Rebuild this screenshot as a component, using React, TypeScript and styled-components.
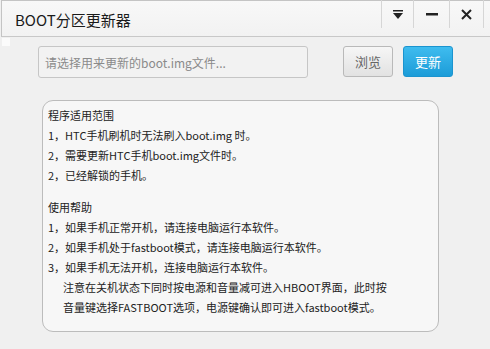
import React from 'react';
import styled, { createGlobalStyle } from 'styled-components';

const GlobalStyle = createGlobalStyle`
  html, body {
    margin: 0;
    padding: 0;
    background: #f0f0f0;
  }
  body {
    font-family: "Noto Sans CJK SC", "Noto Sans", sans-serif;
    color: #222;
  }
`;

const Window = styled.div`
  width: 490px;
  height: 349px;
  background: #f0f0f0;
  display: flex;
  flex-direction: column;
  overflow: hidden;
`;

const TitleBar = styled.div`
  display: flex;
  align-items: stretch;
  justify-content: space-between;
  background: linear-gradient(#f8f8f8, #f2f2f2);
  border-top: 1px solid #c4c4c4;
  border-left: 1px solid #c4c4c4;
  border-bottom: 1px solid #c8c8c8;
  margin-left: 1px;
  box-sizing: border-box;
  height: 37px;
`;

const Title = styled.div`
  font-size: 15px;
  line-height: 1;
  padding: 11px 0 0 13px;
  color: #1a1a1a;
`;

const Controls = styled.div`
  display: flex;
  height: 28px;
  margin-top: -1px;
  margin-right: 6px;
  border-right: 1px solid #d6d6d6;
`;

const ControlButton = styled.div<{ $w: number }>`
  width: ${(p) => p.$w}px;
  border-left: 1px solid #d6d6d6;
  display: flex;
  align-items: center;
  justify-content: center;
  color: #222;
`;

const Body = styled.div`
  position: relative;
  flex: 1;
  display: flex;
  flex-direction: column;
  padding-top: 9px;
`;

const Marker = styled.div`
  position: absolute;
  left: 2px;
  top: 1px;
  width: 8px;
  height: 8px;
  background: #fbfbfb;
`;

const FileRow = styled.div`
  display: flex;
  align-items: flex-start;
  margin-left: 38px;
`;

const PathInput = styled.div`
  width: 270px;
  height: 32px;
  box-sizing: border-box;
  border: 1px solid #c6c6c6;
  border-radius: 3px;
  background: #f2f2f2;
  font-size: 12px;
  color: #8a8a8a;
  display: flex;
  align-items: center;
  padding-left: 6px;
`;

const Button = styled.div<{ $primary?: boolean }>`
  width: 50px;
  height: 31px;
  box-sizing: border-box;
  border-radius: 3px;
  display: flex;
  align-items: center;
  justify-content: center;
  font-size: 13px;
  border: 1px solid ${(p) => (p.$primary ? '#1b94cf' : '#b9b9b9')};
  background: ${(p) =>
    p.$primary ? 'linear-gradient(#3fbcef, #1c9cd8)' : 'linear-gradient(#f6f6f6, #e2e2e2)'};
  color: ${(p) => (p.$primary ? '#ffffff' : '#666')};
  margin-left: ${(p) => (p.$primary ? 10 : 35)}px;
`;

const InfoBox = styled.div`
  margin: 22px 0 0 42px;
  width: 397px;
  height: 232px;
  box-sizing: border-box;
  border: 1px solid #bcbcbc;
  border-radius: 11px;
  background: #f7f7f7;
  padding: 4px 0 0 5px;
  display: flex;
  flex-direction: column;
  gap: 12px;
`;

const Section = styled.div`
  display: flex;
  flex-direction: column;
`;

const Line = styled.div<{ $indent?: boolean }>`
  font-size: 11px;
  line-height: 20px;
  white-space: nowrap;
  padding-left: ${(p) => (p.$indent ? 15 : 0)}px;
`;

const sections: { text: string; indent?: boolean }[][] = [
  [
    { text: '程序适用范围' },
    { text: '1，HTC手机刷机时无法刷入boot.img 时。' },
    { text: '2，需要更新HTC手机boot.img文件时。' },
    { text: '2，已经解锁的手机。' },
  ],
  [
    { text: '使用帮助' },
    { text: '1，如果手机正常开机，请连接电脑运行本软件。' },
    { text: '2，如果手机处于fastboot模式，请连接电脑运行本软件。' },
    { text: '3，如果手机无法开机，连接电脑运行本软件。' },
    { text: '注意在关机状态下同时按电源和音量减可进入HBOOT界面，此时按', indent: true },
    { text: '音量键选择FASTBOOT选项，电源键确认即可进入fastboot模式。', indent: true },
  ],
];

export default function App() {
  return (
    <>
      <GlobalStyle />
      <Window>
        <TitleBar>
          <Title>BOOT分区更新器</Title>
          <Controls>
            <ControlButton $w={31}>
              <svg width="10" height="9" viewBox="0 0 10 9">
                <rect x="0" y="0" width="10" height="1.5" fill="#222" />
                <path d="M0 3 H10 L5 9 Z" fill="#222" />
              </svg>
            </ControlButton>
            <ControlButton $w={35}>
              <svg width="12" height="3" viewBox="0 0 12 3">
                <rect x="0" y="0" width="12" height="2.5" fill="#222" />
              </svg>
            </ControlButton>
            <ControlButton $w={33}>
              <svg width="11" height="11" viewBox="0 0 11 11">
                <path d="M1 1 L10 10 M10 1 L1 10" stroke="#222" strokeWidth="2" />
              </svg>
            </ControlButton>
          </Controls>
        </TitleBar>
        <Body>
          <Marker />
          <FileRow>
            <PathInput>请选择用来更新的boot.img文件...</PathInput>
            <Button>浏览</Button>
            <Button $primary>更新</Button>
          </FileRow>
          <InfoBox>
            {sections.map((lines, i) => (
              <Section key={i}>
                {lines.map((l, j) => (
                  <Line key={j} $indent={l.indent}>
                    {l.text}
                  </Line>
                ))}
              </Section>
            ))}
          </InfoBox>
        </Body>
      </Window>
    </>
  );
}
